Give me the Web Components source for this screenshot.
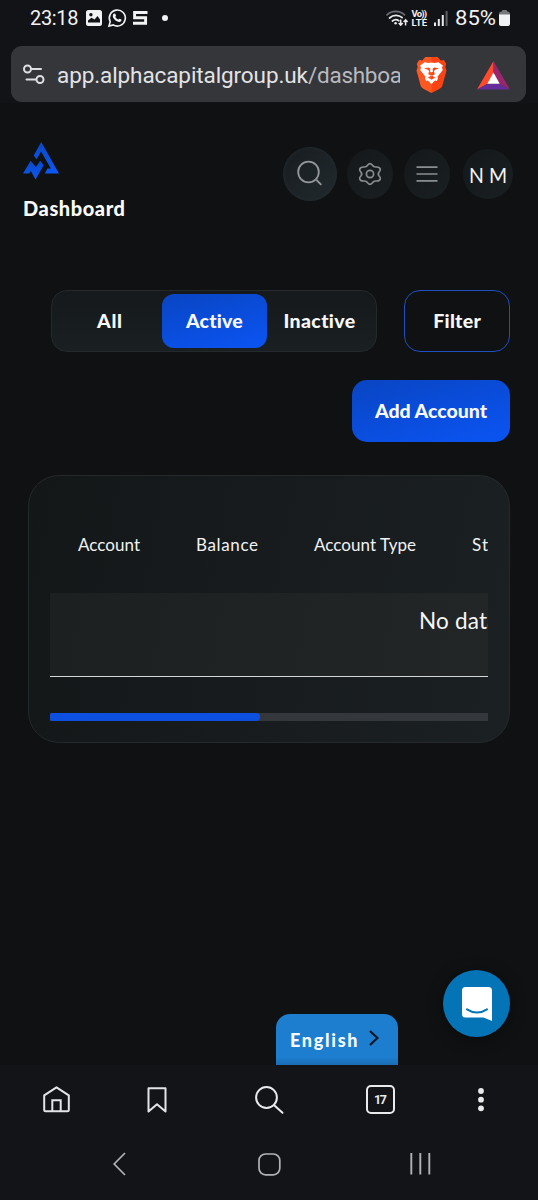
<!DOCTYPE html>
<html lang="en">
<head>
<meta charset="utf-8">
<title>Dashboard</title>
<style>
html,body{margin:0;padding:0;background:#0f1112}
body{width:538px;height:1200px;overflow:hidden;font-family:Lato,"Open Sans",sans-serif;color:#f5f6f7}
</style>
</head>
<body>
<phone-screen></phone-screen>
<script>
const define = (name, html, setup) => customElements.define(name, class extends HTMLElement {
  constructor() {
    super();
    const t = document.createElement('template');
    t.innerHTML = html;
    this.attachShadow({ mode: 'open' }).appendChild(t.content.cloneNode(true));
  }
  connectedCallback() { if (setup) setup(this, this.shadowRoot); }
});

/* Label whose tracking is adjusted so that it (or its first n letters) spans a given width */
define('fit-label', `<style>:host{display:block;white-space:nowrap;flex:none}span{display:inline-block;transform-origin:0 50%}</style><span><slot></slot></span>`, (el, root) => {
  const span = root.querySelector('span');
  const w = +el.getAttribute('w');
  const node = el.firstChild;
  const n = +(el.getAttribute('first') || node.data.length);
  const r = document.createRange();
  r.setStart(node, 0); r.setEnd(node, n);
  const natural = r.getBoundingClientRect().width;
  if (el.hasAttribute('squeeze')) span.style.transform = `scaleX(${w / natural})`;
  else span.style.letterSpacing = ((w - natural) / (n - 1 || 1)) + 'px';
  if (!el.hasAttribute('first')) el.style.width = w + 'px';
});

const icons = {
  picture: ['0 0 16 16', '<path fill="#f1f2f3" fill-rule="evenodd" d="M2.500 0h11Q16 0 16 2.500v11Q16 16 13.500 16h-11Q0 16 0 13.500v-11Q0 0 2.500 0zM2 12.500h12V9.600L11.500 6 8.500 9.600 5.500 7.700 2 10.600zM4.900 2.900a1.700 1.700 0 1 0 .01 0z"/>'],
  phonechat: ['0 0 18 18', '<path d="M1 17l1.200-4.300A8 8 0 1 1 5.200 15.900z" fill="none" stroke="#f1f2f3" stroke-width="1.600"/><path fill="#f1f2f3" d="M6.200 4.600c.6-.3 1 0 1.200.5l.6 1.400c.2.500-.8 1.300-.6 1.600.7 1.200 1.500 1.900 2.700 2.500.5.200 1.100-1.100 1.600-.8l1.500.8c.5.300.3 1.200-.2 1.700-1 1-2.600.8-4.400-.2-1.500-.8-2.800-2.200-3.500-3.700-.7-1.400-.2-3.300 1.100-3.800z"/>'],
  steps: ['0 0 15 14', '<path d="M14.500 1.500H1.600V6.800H12.600V12.200H0" fill="none" stroke="#f1f2f3" stroke-width="2.900"/>'],
  wifi: ['0 0 22 17', '<g fill="none" stroke-width="1.700" stroke-linecap="round"><path d="M1 4.800c5-4.700 12.500-4.700 17.500 0" stroke="#6d6e73"/><path d="M3.500 8c3.700-3.400 9.200-3.400 12.700-.3M6.400 11c2-1.700 4.400-1.800 6.400-.3" stroke="#e9eaec"/></g><circle cx="9.600" cy="13.300" r="1.300" fill="#e9eaec"/><path d="M14.700 9.500v5.500m-2-2l2 2.200 2-2.200M19.600 15.500v-5.500m-2 2l2-2.200 2 2.200" fill="none" stroke="#e9eaec" stroke-width="1.500"/>'],
  signal: ['0 0 14 15', '<g fill="#e9eaec"><rect x="0" y="11.500" width="2" height="3.500"/><rect x="3.800" y="8" width="2" height="7"/><rect x="7.800" y="4" width="2" height="11"/></g><rect x="11.600" y="0" width="2" height="15" fill="#5e5f63"/>'],
  battery: ['0 0 11 16', '<rect x="3" y="0" width="5" height="3" rx="1" fill="#77787c"/><rect y="1.500" width="11" height="14.500" rx="2.500" fill="#77787c"/><path d="M0 4.500h11v9q0 2.500-2.500 2.500h-6Q0 16 0 13.500z" fill="#f1f2f3"/>'],
  tune: ['0 0 22 20', '<g fill="none" stroke="#dedfe3" stroke-width="2" stroke-linecap="round"><circle cx="4.500" cy="5" r="3.500"/><path d="M8.500 5H18M3.500 15.500h9.500"/><circle cx="17" cy="15.500" r="3.500"/></g>'],
  brave: ['0 0 31 36', '<defs><linearGradient id="b"><stop offset=".48" stop-color="#ff5722"/><stop offset=".52" stop-color="#fb4313"/></linearGradient></defs><path fill="url(#b)" d="M9.300 0h12.400l3 3.400 3.200-.4 2.300 4-.9 3 1.200 3.500-4.300 15.800Q25.500 31.500 15.500 36 5.500 31.500 4.800 29.300L.5 13.500 1.700 10l-.9-3 2.300-4 3.200.4z"/><path fill="#fff" fill-rule="evenodd" d="M4.200 8.500L8.500 5.200l4 .9 3-.6 3 .6 4-.9 4.300 3.300-.8 2.500.8 2-5.300 6.800.5 1.800-1.200 2.400-1.900-.6-3.400 3.900-3.400-3.900-1.900.6L9 21.600l.5-1.800-5.300-6.800.8-2zM8 11.200l3.700 1.600 1.400 1.200-.9 3.200 3.300 1.800 3.300-1.800-.9-3.200 1.400-1.200 3.700-1.600-4.700-.6-1.600 1 .2 3.300-1.400.4-1.400-.4.200-3.300-1.600-1zM11 21.300l1.700-.3 2.800 1.700 2.800-1.700 1.700.3-4.500-3z"/>'],
  bat: ['0 0 33 29', '<path fill="#ff4b2b" d="M16.500 0v12L10.700 22.800 0 28.600z"/><path fill="#97266d" d="M16.500 0L33 28.600l-10.700-5.800L16.500 12z"/><path fill="#652d9b" d="M0 28.600l10.700-5.900h11.600L33 28.600z"/><path fill="#fff" d="M16.500 11.500l6.200 11.300H10.300z"/>'],
  logo: ['0 0 36 38', '<defs><linearGradient id="l" x2="0" y2="1"><stop stop-color="#0a49c8"/><stop offset="1" stop-color="#0c58f4"/></linearGradient></defs><path fill="url(#l)" d="M18.200 0L36 31.600H21.800l2.600-5h3.500L18 9.500l-4.300 7.700-3-3.700z"/><path fill="url(#l)" d="M0 31.500L7.700 18.800l5.200 6.300 4.400-6.300 3.400 4.400L12.500 37.600 7.800 29l-1.600 2.500z"/>'],
  search: ['0 0 26 26', '<g fill="none" stroke="#94979a" stroke-width="1.800"><circle cx="11.500" cy="11" r="10.300"/><path d="M19.500 19l4.800 4.800"/></g>'],
  gear: ['0 0 24 24', '<g fill="none" stroke="#888c8e" stroke-width="1.700" stroke-linejoin="round"><path d="M9.800 3Q12 .2 14.200 3q1.400 2.200 3.800 2 3.700-.2 4.300 2.200.3 1.400-1.200 2.800-1.600 2 0 4 1.500 1.400 1.200 2.800-.6 2.400-4.300 2.200-2.400-.2-3.800 2-2.200 2.800-4.400 0-1.400-2.200-3.800-2-3.700.2-4.300-2.200Q1.400 15.400 2.900 14q1.600-2 0-4Q1.400 8.600 1.700 7.200 2.300 4.800 6 5q2.400.2 3.800-2z"/><circle cx="12" cy="12" r="3.600"/></g>'],
  menu: ['0 0 22 16', '<path d="M.5 1.200h21M.5 8h21M.5 14.900h21" stroke="#8b8e90" stroke-width="1.700"/>'],
  chevron: ['0 0 10 16', '<path d="M1 1l7.500 7L1 15" fill="none" stroke="#0b1622" stroke-width="2.100"/>'],
  chat: ['0 0 30 34', '<path fill="#fff" d="M3.500 0h23Q30 0 30 3.500V34l-8.500-3.500h-18Q0 30.500 0 27V3.500Q0 0 3.500 0z"/><path d="M5 22.300q10 6.500 20 0" fill="none" stroke="#0574b7" stroke-width="2" stroke-linecap="round"/>'],
  home: ['0 0 27 27', '<g fill="none" stroke="#e3e4e7" stroke-width="2" stroke-linejoin="round"><path d="M1.200 9.300L13.500 1.300l12.300 8v14.500q0 1.500-1.500 1.500H2.700q-1.500 0-1.500-1.500z"/><path stroke-linejoin="miter" d="M9.300 25V14.200h8.400V25"/></g>'],
  bookmark: ['0 0 20 26', '<path d="M1.500 1.200h17v23.300L10 17.300 1.500 24.500z" fill="none" stroke="#e3e4e7" stroke-width="2" stroke-linejoin="round"/>'],
  find: ['0 0 29 28', '<g fill="none" stroke="#e9eaec" stroke-width="2" stroke-linecap="round"><circle cx="11.500" cy="11.500" r="10.400"/><path d="M19.200 19.200l8.300 7.600"/></g>'],
  dots: ['0 0 6 24', '<g fill="#e9eaec"><circle cx="3" cy="3" r="2.900"/><circle cx="3" cy="11.700" r="2.900"/><circle cx="3" cy="20.300" r="2.900"/></g>'],
  back: ['0 0 13 24', '<path d="M12 1L1.200 12 12 23" fill="none" stroke="#b1b2b6" stroke-width="1.700"/>'],
  homekey: ['0 0 23 23', '<rect x="1" y="1" width="20.800" height="20.800" rx="6.500" fill="none" stroke="#b1b2b6" stroke-width="1.700"/>'],
  recents: ['0 0 21 22', '<path d="M1.300 0v21.500M10.300 0v21.500M19.300 0v21.500" stroke="#b1b2b6" stroke-width="1.900"/>']
};
define('ui-icon', `<style>:host{display:block;flex:none}svg{display:block;overflow:visible}</style><div></div>`, (el, root) => {
  const [box, body] = icons[el.getAttribute('name')];
  const [, , w, h] = box.split(' ');
  root.querySelector('div').innerHTML = `<svg viewBox="${box}" width="${w}" height="${h}">${body}</svg>`;
});

define('status-bar', `<style>
:host{display:flex;align-items:center;height:36px;padding:0 28px 0 30px;font:20px/36px Roboto,sans-serif;color:#f1f2f3}
.dot{width:6px;height:6px;border-radius:50%;background:#f1f2f3;margin-left:14px}
.sp{flex:1}
.volte{font:bold 9.500px/9px Roboto,sans-serif;margin:0 7px 0 4px}
</style>
<fit-label w="48.500">23:18</fit-label>
<ui-icon name="picture" style="margin-left:7px"></ui-icon>
<ui-icon name="phonechat" style="margin-left:6px"></ui-icon>
<ui-icon name="steps" style="margin-left:7px"></ui-icon>
<div class="dot"></div><div class="sp"></div>
<ui-icon name="wifi"></ui-icon>
<div class="volte"><fit-label w="15.500">Vo))</fit-label><fit-label w="15.500">LTE</fit-label></div>
<ui-icon name="signal" style="margin-right:7px"></ui-icon>
<fit-label w="41" squeeze style="font-size:21px">85%</fit-label>
<ui-icon name="battery" style="margin-left:3px"></ui-icon>`);

define('address-bar', `<style>
:host{display:flex;align-items:center;height:56px;margin:10px 12px 0 11px;border-radius:11px;background:#35363a;box-sizing:border-box;padding:0 16px 0 12px}
.url{display:flex;width:343px;margin-left:12px;overflow:hidden;font:22.500px/34px Roboto,sans-serif;color:#e3e3e6;padding-top:2px}
.path{color:#b9bac0}
</style>
<ui-icon name="tune"></ui-icon>
<div class="url"><fit-label w="251">app.alphacapitalgroup.uk</fit-label><fit-label class="path" w="94" first="8">/dashboard</fit-label></div>
<ui-icon name="brave" style="margin:2px 0 0 16px"></ui-icon>
<ui-icon name="bat" style="margin:2px 0 0 auto"></ui-icon>`);

define('round-button', `<style>
:host{display:flex;align-items:center;justify-content:center;flex:none;width:46px;height:50px;border-radius:50%;background:linear-gradient(135deg,#14181a,#1a1f22)}
:host([large]){width:54px;height:54px;background:linear-gradient(135deg,#171c1f,#222a2f);box-shadow:inset 0 0 4px #252c31}
:host([wide]){width:50px}
</style><slot></slot>`);

define('page-header', `<style>
:host{display:flex;justify-content:space-between;height:108px;padding:39px 25px 0 23px;box-sizing:border-box}
h1{margin:16px 0 0;font:900 20px/24px Lato,sans-serif;color:#fafafa}
.tools{display:flex;align-items:center;height:54px;margin-top:5px}
</style>
<div><ui-icon name="logo"></ui-icon><h1><fit-label w="102">Dashboard</fit-label></h1></div>
<div class="tools">
<round-button large><ui-icon name="search"></ui-icon></round-button>
<round-button style="margin-left:10px"><ui-icon name="gear"></ui-icon></round-button>
<round-button style="margin-left:11px"><ui-icon name="menu"></ui-icon></round-button>
<round-button wide style="margin-left:13px"><fit-label w="38" squeeze style="font-size:21px">N M</fit-label></round-button>
</div>`);

define('ui-button', `<style>
:host{display:flex;align-items:center;justify-content:center;flex:none;box-sizing:border-box;font:900 19.500px/26px Lato,sans-serif;color:#f7f8fa;padding-bottom:1px}
:host([primary]){background:linear-gradient(165deg,#0946c5 5%,#0b53ef 90%)}
:host([outline]){border:1px solid #1e50c0}
</style><slot></slot>`);

define('account-filters', `<style>
:host{display:block;padding:79px 28px 0 51px}
.row{display:flex;justify-content:space-between;height:62px}
.tabs{display:flex;align-items:center;width:326px;box-sizing:border-box;border:1px solid #24292b;border-radius:16px;background:linear-gradient(180deg,#15191b,#1a1f22);padding:0 0 0 5px}
.tabs ui-button{width:105px;height:54px;border-radius:12px}
.add{width:158px;height:62px;border-radius:15px;margin:28px 0 0 auto}
</style>
<div class="row">
<div class="tabs"><ui-button><fit-label w="25">All</fit-label></ui-button><ui-button primary><fit-label w="57">Active</fit-label></ui-button><ui-button><fit-label w="72">Inactive</fit-label></ui-button></div>
<ui-button outline style="width:106px;height:62px;border-radius:16px"><fit-label w="47.500">Filter</fit-label></ui-button>
</div>
<ui-button primary class="add"><fit-label w="112">Add Account</fit-label></ui-button>`);

define('accounts-card', `<style>
:host{display:block;box-sizing:border-box;width:482px;height:268px;margin:33px 0 0 28px;padding:0 21px;border:1px solid #24292b;border-radius:31px;background:linear-gradient(100deg,#141718,#1b2023)}
.scroll{overflow:hidden;width:438px}
.head{display:flex;align-items:center;padding:21px 0 0 28px;height:96px;font:17px/24px Lato,sans-serif;color:#f1f2f3}
.head fit-label+fit-label{margin-left:56px}
.body{height:83px;border-bottom:1px solid #d5d6d7;background:linear-gradient(100deg,#1d2021,#222627);padding-left:369px;font:22.500px/55px Lato,sans-serif}
.track{height:8px;margin-top:36px;background:#34373b}
.thumb{width:210px;height:8px;border-radius:2px 4px 4px 2px;background:#0d50df}
</style>
<div class="scroll">
<div class="head"><fit-label w="62">Account</fit-label><fit-label w="62">Balance</fit-label><fit-label w="102">Account Type</fit-label><fit-label w="16" first="2">Status</fit-label></div>
<div class="body"><fit-label w="68" first="6">No data</fit-label></div>
<div class="track"><div class="thumb"></div></div>
</div>`);

define('language-tab', `<style>
:host{position:absolute;left:276px;top:1014px;width:122px;height:51px;border-radius:14px 14px 0 0;background:linear-gradient(#1d7dce 85%,#1b6db5);display:flex;align-items:center;padding:0 0 0 14px;box-sizing:border-box;font:900 18px/24px Lato,sans-serif;color:#f4f9ff}
ui-icon{margin:-4px 0 0 11px}
</style><fit-label w="67.500">English</fit-label><ui-icon name="chevron"></ui-icon>`);

define('chat-launcher', `<style>
:host{position:absolute;left:443px;top:970px;width:67px;height:67px;border-radius:50%;background:#0574b7;display:flex;align-items:center;justify-content:center;box-shadow:0 2px 16px #0006}
</style><ui-icon name="chat"></ui-icon>`);

define('browser-toolbar', `<style>
:host{display:flex;align-items:center;height:69px;padding-left:43px}
.count{box-sizing:border-box;width:29px;height:29px;border:2px solid #e9eaec;border-radius:5px;font:bold 12.500px/25px Roboto,sans-serif;display:flex;justify-content:center;color:#e9eaec;margin-left:82px}
</style>
<ui-icon name="home"></ui-icon><ui-icon name="bookmark" style="margin-left:77px"></ui-icon><ui-icon name="find" style="margin-left:88px"></ui-icon>
<div class="count"><fit-label w="13">17</fit-label></div>
<ui-icon name="dots" style="margin-left:83px"></ui-icon>`);

define('system-nav', `<style>
:host{display:flex;align-items:center;height:60px;padding-left:113px}
</style><ui-icon name="back"></ui-icon><ui-icon name="homekey" style="margin-left:132px"></ui-icon><ui-icon name="recents" style="margin-left:129px"></ui-icon>`);

define('phone-screen', `<style>
:host{display:flex;flex-direction:column;position:relative;width:538px;height:1200px;overflow:hidden;background:#0f1112}
.top{height:103px;background:#121317;flex:none}
main{flex:1}
.bottom{height:135px;background:#131418;flex:none}
</style>
<div class="top"><status-bar></status-bar><address-bar></address-bar></div>
<main><page-header></page-header><account-filters></account-filters><accounts-card></accounts-card></main>
<div class="bottom"><browser-toolbar></browser-toolbar><system-nav></system-nav></div>
<language-tab></language-tab><chat-launcher></chat-launcher>`);
</script>
</body>
</html>
